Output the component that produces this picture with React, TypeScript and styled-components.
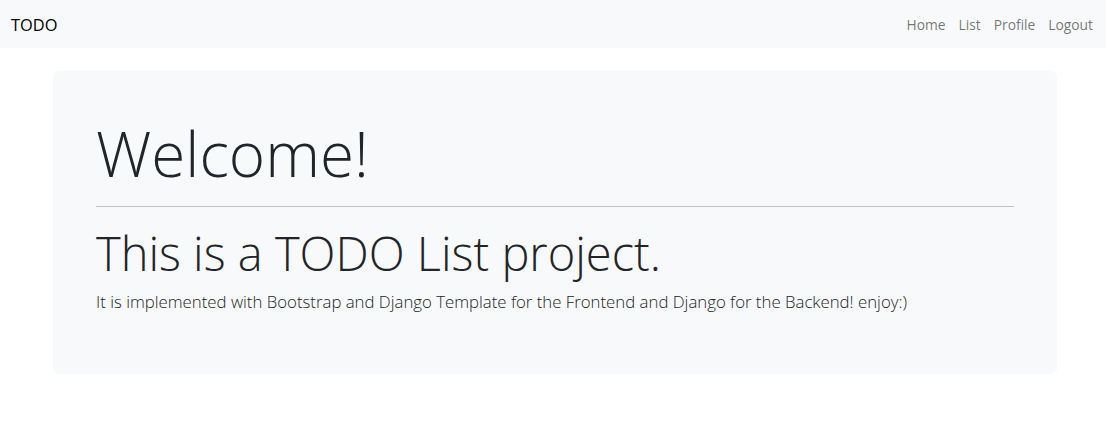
import React from "react";
import styled, { createGlobalStyle } from "styled-components";

const GlobalStyle = createGlobalStyle`
  html, body {
    margin: 0;
    padding: 0;
    background: #ffffff;
    font-family: "Open Sans", "Noto Sans", sans-serif;
    color: #212529;
  }
  * {
    box-sizing: border-box;
  }
`;

const Navbar = styled.nav`
  height: 48px;
  background-color: #f8f9fa;
  display: flex;
  align-items: center;
  justify-content: space-between;
  padding: 0 13px 0 11px;
`;

const Brand = styled.a`
  font-size: 16.4px;
  font-weight: 400;
  color: #000;
  text-decoration: none;
`;

const NavLinks = styled.ul`
  display: flex;
  gap: 13px;
  list-style: none;
  margin: 0;
  padding: 0;
`;

const NavLink = styled.a`
  font-size: 13.8px;
  color: rgba(0, 0, 0, 0.55);
  text-decoration: none;
`;

const Main = styled.main`
  padding: 23px 49px 0 53px;
`;

const Jumbotron = styled.section`
  background-color: #f8f9fa;
  border-radius: 6px;
  padding: 45px 43px 60px 43px;
`;

const Display = styled.h1`
  margin: 0;
  font-size: 62px;
  font-weight: 300;
  line-height: 1.2;
`;

const Rule = styled.hr`
  margin: 16px 0 18px;
  border: 0;
  border-top: 1px solid rgba(0, 0, 0, 0.22);
`;

const Subtitle = styled.h2`
  margin: 0;
  font-size: 47px;
  font-weight: 300;
  line-height: 1.2;
`;

const Lead = styled.p`
  margin: 7px 0 0;
  font-size: 16.8px;
  font-weight: 300;
  line-height: 1.5;
`;

const links = ["Home", "List", "Profile", "Logout"];

const App = () => {
  return (
    <>
      <GlobalStyle />
      <Navbar>
        <Brand href="#">TODO</Brand>
        <NavLinks>
          {links.map((l) => (
            <li key={l}>
              <NavLink href="#">{l}</NavLink>
            </li>
          ))}
        </NavLinks>
      </Navbar>
      <Main>
        <Jumbotron>
          <Display>Welcome!</Display>
          <Rule />
          <Subtitle>This is a TODO List project.</Subtitle>
          <Lead>
            It is implemented with Bootstrap and Django Template for the Frontend and Django for the
            Backend! enjoy:)
          </Lead>
        </Jumbotron>
      </Main>
    </>
  );
};

export default App;
